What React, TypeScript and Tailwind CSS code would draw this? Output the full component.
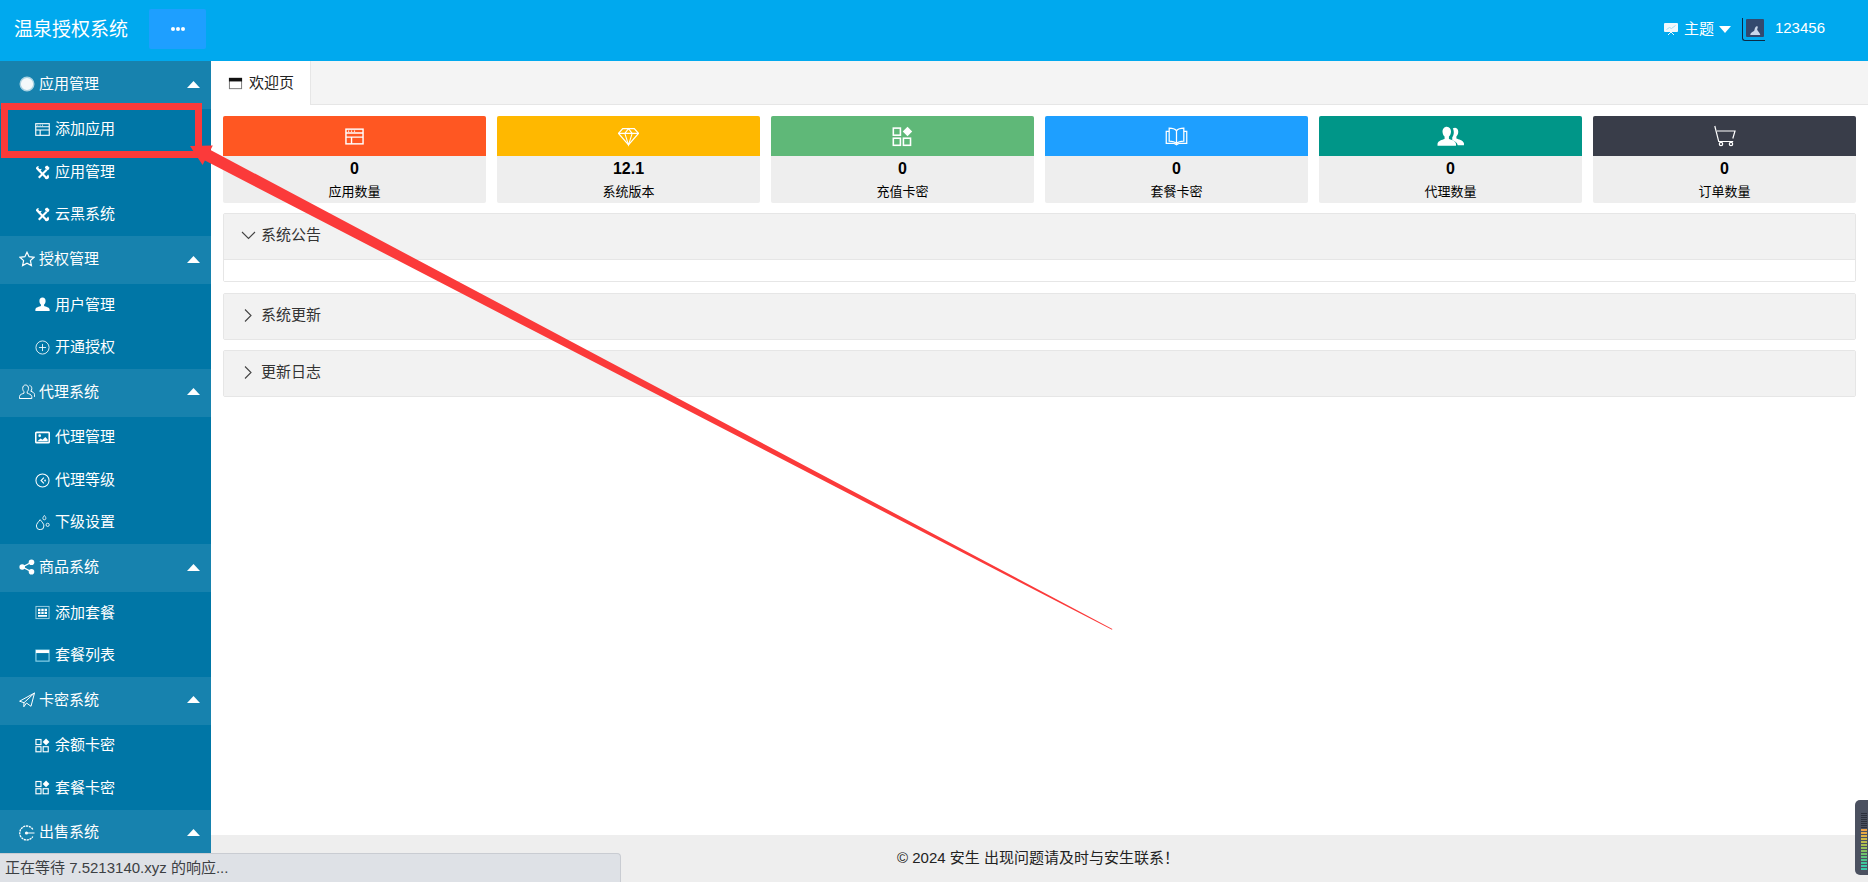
import React from "react";

const Ic = ({ w = 14, h = 14, vb = "0 0 16 16", children, className = "" }: { w?: number; h?: number; vb?: string; children: React.ReactNode; className?: string }) => (
  <svg width={w} height={h} viewBox={vb} fill="none" stroke="currentColor" strokeWidth="1.2" className={`shrink-0 ${className}`}>
    {children}
  </svg>
);

const I: Record<string, React.ReactNode> = {
  circle: <circle cx="8" cy="8" r="6.8" fill="#f4f8fa" stroke="#a9d2e2" strokeWidth="1.4" />,
  template: (
    <>
      <rect x="0.8" y="1.800" width="14.400" height="12.400" />
      <path d="M.8 5h14.400M.8 8.500h14.400M5.500 8.500V14" />
      <path d="M2.500 3.400h1M5 3.400h1M7.500 3.400h1" strokeWidth="1" />
    </>
  ),
  tools: (
    <>
      <path d="M4 13.500 12.500 5" strokeWidth="2.200" />
      <path d="M3.500 5 12 13.500" strokeWidth="2.200" />
      <path d="M1 4c0-2 1.500-3 3-3L3.500 3l1.500 1.500L7 4c0 1.500-1.500 3-3.500 2.500z" fill="currentColor" stroke="none" />
      <path d="M11 1.500l2-1 2.500 2.500-1 2-1.500.5-2.500-2.500z" fill="currentColor" stroke="none" />
      <path d="M10.500 14.500c1 1 3 1 4-.5s.2-3-.5-4z" fill="currentColor" stroke="none" />
    </>
  ),
  star: <path d="M8 1.200l2.100 4.500 4.900.6-3.600 3.300 1 4.900L8 12.100l-4.400 2.400 1-4.900L1 6.300l4.900-.6z" />,
  user: <path d="M8 .6c2.200 0 3.300 1.700 3.300 3.600 0 1.600-.8 3.300-1.600 3.900v1.500c1.600.7 5.700 1.400 5.900 3.700v1.700H.4v-1.700c.2-2.300 4.300-3 5.900-3.700V8.100C5.500 7.500 4.700 5.800 4.700 4.200 4.700 2.300 5.800.6 8 .6z" fill="currentColor" stroke="none" />,
  add: (
    <>
      <circle cx="8" cy="8" r="7" strokeWidth="0.9" />
      <path d="M8 4.200v7.600M4.200 8h7.600" strokeWidth="0.9" />
    </>
  ),
  agent: (
    <>
      <path d="M6.500 1c2 0 3 1.500 3 3.400 0 1.400-.6 2.700-1.300 3.300v1.500c1.500.6 4.300 1.200 4.600 3.300v2H.4v-2c.3-2.100 3.100-2.700 4.600-3.300V7.700c-.7-.6-1.300-1.900-1.300-3.300C3.700 2.500 4.800 1 6.500 1z" strokeWidth="1" />
      <path d="M10.500 1.300c1.500.4 2.300 1.700 2.300 3.200 0 1-.4 2.100-1 2.700 1.600.6 3.600 1.500 3.800 3.400v2.300" strokeWidth="1" />
    </>
  ),
  picture: (
    <>
      <rect x="0.800" y="2.500" width="14.400" height="11" rx="1" strokeWidth="1.700" />
      <circle cx="5" cy="6" r="1.400" fill="currentColor" stroke="none" />
      <path d="M2.500 12l3.500-3 2 1.500 3-3 2.500 2.500V12z" fill="currentColor" stroke="none" />
    </>
  ),
  ret: (
    <>
      <circle cx="8" cy="8" r="7" strokeWidth="1.100" />
      <path d="M9.500 5 6.500 8l3 3" />
      <circle cx="10.800" cy="8" r="0.400" />
    </>
  ),
  drops: (
    <>
      <path d="M5.500 5c1.900 2.500 4 4.300 4 6.700a4 4 0 0 1-8 0C1.500 9.300 3.600 7.500 5.500 5z" strokeWidth="1" />
      <path d="M10 .5c.9 1.100 1.600 2 1.600 3a1.600 1.600 0 0 1-3.200 0c0-1 .7-1.900 1.600-3z" strokeWidth="0.900" />
      <circle cx="13.500" cy="10.500" r="1.700" strokeWidth="0.900" />
    </>
  ),
  share: (
    <>
      <path d="M12 3.500 3.500 8l8.500 4.500" strokeWidth="1.400" />
      <circle cx="12.500" cy="3.200" r="2.800" fill="currentColor" stroke="none" />
      <circle cx="3.200" cy="8" r="2.800" fill="currentColor" stroke="none" />
      <circle cx="12.500" cy="12.800" r="2.800" fill="currentColor" stroke="none" />
    </>
  ),
  table: (
    <>
      <rect x="1" y="1.500" width="14" height="13" strokeWidth="1" stroke="#9fd0e2" />
      <path d="M3.200 4h2.600v2.400H3.200zM6.700 4h2.600v2.400H6.700zM10.200 4h2.600v2.400h-2.600zM3.200 7.300h2.600v2.400H3.200zM6.700 7.300h2.600v2.400H6.700zM10.200 7.300h2.600v2.400h-2.600zM3.200 10.600h9.600v1.800H3.200z" fill="currentColor" stroke="none" />
    </>
  ),
  win: (
    <>
      <rect x="1" y="2.200" width="14" height="11.800" strokeWidth="1.200" stroke="#8fd6ec" />
      <rect x="1" y="2.200" width="14" height="3.200" fill="currentColor" stroke="none" />
    </>
  ),
  winDark: (
    <>
      <rect x="1.500" y="2.500" width="13" height="11" strokeWidth="1" stroke="#777" />
      <rect x="1" y="2" width="14" height="3.800" fill="#111" stroke="none" />
    </>
  ),
  send: <path d="M15.500 1 .6 9.200l4.400 1.500zM15.500 1 12 14.300 7.500 11 4.800 14.800l.2-4.100" strokeWidth="1" strokeLinejoin="round" />,
  app: (
    <>
      <rect x="1" y="1.600" width="5.400" height="5.400" />
      <rect x="1" y="9.300" width="5.400" height="5.400" />
      <rect x="8.700" y="9.300" width="5.400" height="5.400" />
      <path d="M11.800 .6 15.400 4.200l-3.600 3.600-3.600-3.600z" fill="currentColor" stroke="none" />
    </>
  ),
  sell: (
    <>
      <path d="M13.800 4.500A7 7 0 1 0 13.800 11.500" strokeWidth="1.300" strokeDasharray="2.200 0.700" />
      <circle cx="7.500" cy="8" r="1.600" fill="currentColor" stroke="none" />
      <path d="M8.500 8H15.500" strokeWidth="1" />
    </>
  ),
  diamond: (
    <>
      <path d="M4.500 2.500h11L19.500 7 10 18 .5 7z" />
      <path d="M.5 7h19M6.500 7 10 18l3.500-11M6.500 7l3.500-4.500L13.500 7" strokeWidth="1" />
    </>
  ),
  read: (
    <>
      <path d="M11 4.500C9.500 2.700 7 2 4 2v12.500c3 0 5.500.7 7 2.500 1.500-1.800 4-2.500 7-2.500V2c-3 0-5.500.7-7 2.500zM11 4.500V17" />
      <path d="M4 5H1.200v11.500H8.500L11 18l2.500-1.500h7.300V5H18" />
    </>
  ),
  group: (
    <>
      <path d="M17.500 1.500c2 .2 3 2 3 4 0 1.800-.8 3.600-1.800 4.400v2c1.900.8 6.400 1.600 7.300 4.500v2h-6c-.6-2.900-3-3.800-5.300-4.700v-3c1-1 1.500-2.800 1.500-4.500 0-1.600-.3-3-1-3.800.6-.5 1.400-.9 2.300-.9z" fill="currentColor" stroke="none" />
      <path d="M9.500.5c2.600 0 4 2.200 4 4.700 0 2-.9 4-2 4.900v2.400c2.300.9 6.300 1.700 6.800 4.500v2H.5v-2c.5-2.800 4.500-3.600 6.800-4.500v-2.400c-1.100-.9-2-2.900-2-4.900C5.300 2.700 6.900.5 9.500.5z" fill="currentColor" stroke="none" />
    </>
  ),
  cart: (
    <>
      <path d="M.8 1l3.900 15.500h14.500" />
      <path d="M3 6h18l-2.200 7.500" />
      <circle cx="7" cy="19" r="1.700" />
      <circle cx="17" cy="19" r="1.700" />
    </>
  ),
};

const groups = [
  { title: "应用管理", icon: "circle", items: [["添加应用", "template"], ["应用管理", "tools"], ["云黑系统", "tools"]] },
  { title: "授权管理", icon: "star", items: [["用户管理", "user"], ["开通授权", "add"]] },
  { title: "代理系统", icon: "agent", items: [["代理管理", "picture"], ["代理等级", "ret"], ["下级设置", "drops"]] },
  { title: "商品系统", icon: "share", items: [["添加套餐", "table"], ["套餐列表", "win"]] },
  { title: "卡密系统", icon: "send", items: [["余额卡密", "app"], ["套餐卡密", "app"]] },
  { title: "出售系统", icon: "sell", items: [] as string[][] },
];

const stats = [
  { n: "0", label: "应用数量", bg: "bg-[#ff5722]", icon: "template", vb: "0 0 16 16", w: 19, h: 19 },
  { n: "12.1", label: "系统版本", bg: "bg-[#ffb800]", icon: "diamond", vb: "0 0 20 20", w: 21, h: 21 },
  { n: "0", label: "充值卡密", bg: "bg-[#5fb878]", icon: "app", vb: "0 0 16 16", w: 21, h: 21 },
  { n: "0", label: "套餐卡密", bg: "bg-[#1e9fff]", icon: "read", vb: "0 0 22 20", w: 23, h: 21 },
  { n: "0", label: "代理数量", bg: "bg-[#009688]", icon: "group", vb: "0 0 27 20", w: 28, h: 21 },
  { n: "0", label: "订单数量", bg: "bg-[#393d49]", icon: "cart", vb: "0 0 22 22", w: 22, h: 22 },
];

const Panel = ({ title, open }: { title: string; open?: boolean }) => (
  <div className="rounded-[2px] border border-[#e6e6e6]">
    <div className={`flex items-center bg-[#f2f2f2] pl-[17px] pb-[2px] text-[15px] text-[#333] ${open ? "h-[46px] border-b border-[#e6e6e6]" : "h-[45px]"}`}>
      <svg width="15" height="15" viewBox="0 0 15 15" fill="none" stroke="#444" strokeWidth="1.100" className="mr-[5px] shrink-0">
        {open ? <path d="M1 4 7.500 10.500 14 4" /> : <path d="M4 1.500 10 7.500 4 13.500" />}
      </svg>
      {title}
    </div>
    {open && <div className="h-[21px] bg-white" />}
  </div>
);

const Meter = () => {
  const cols = ["#39c9a8", "#39c9a8", "#3fc79c", "#4cc68d", "#5fc47c", "#72c36e", "#85c263", "#98c15a", "#aabf52", "#bdbc4c", "#cfb848", "#dfb145", "#e8a945", "#eda247"];
  return (
    <div className="absolute bottom-[7px] right-0 flex h-[75px] w-[13px] flex-col items-end justify-end gap-[1px] rounded-l-[5px] bg-[#4b5160] pb-[5px] pr-[1px]">
      {Array.from({ length: 8 }).map((_, i) => (
        <div key={i} className="h-[1px] w-[6px] bg-[#2c303b]" />
      ))}
      {cols.slice().reverse().map((c, i) => (
        <div key={i} className="h-[2px] w-[6px]" style={{ background: c }} />
      ))}
    </div>
  );
};

export default function App() {
  return (
    <div className="relative flex h-[882px] w-[1868px] flex-col overflow-hidden bg-white font-['Liberation_Sans','Noto_Sans_CJK_SC',sans-serif] text-[14px]">
      <header className="flex h-[61px] shrink-0 items-center bg-[#00a9ee] pb-[3px] text-white">
        <div className="ml-[14px] w-[135px] text-[19px] leading-none">温泉授权系统</div>
        <button className="flex h-[40px] w-[57px] items-center justify-center gap-[1px] rounded-[2px] bg-[#1e9fff]">
          <span className="size-[4px] rounded-full bg-white" />
          <span className="size-[4px] rounded-full bg-white" />
          <span className="size-[4px] rounded-full bg-white" />
        </button>
        <div className="ml-auto mr-[43px] flex items-center">
          <svg width="14" height="14" viewBox="0 0 14 14" className="mr-[6px]">
            <rect x="0" y="1" width="14" height="9" rx="1" fill="#f1f8fc" />
            <path d="M4 13l3-3 3 3" stroke="#f1f8fc" fill="none" />
            <path d="M2.500 7.500l3-2 2 1 4-3" stroke="#a5dcf3" fill="none" />
          </svg>
          <span className="mr-[5px] text-[15px]">主题</span>
          <svg width="12" height="7" viewBox="0 0 12 7" className="mr-[11px]">
            <path d="M0 0h12L6 7z" fill="white" />
          </svg>
          <div className="mr-[10px] flex h-[23px] w-[23px] items-start justify-end rounded-bl-[3px] border-b border-l border-[#0b2a45] pr-[1px] pt-[1px]">
            <svg width="18" height="18" viewBox="0 0 17 17">
              <rect width="17" height="17" rx="1" fill="#33496e" />
              <path d="M4 15c.5-3 3.500-2.500 4-4.500.2-2 1.500-4.500 3-3.500 .5 1-.5 2-.5 3 .5 2 2.500 2.500 3 5z" fill="#c8d6ea" />
            </svg>
          </div>
          <span className="-translate-y-[1px] text-[15px]">123456</span>
        </div>
      </header>

      <div className="flex min-h-0 flex-1">
        <aside className="w-[211px] shrink-0 overflow-hidden bg-[#0076a6] text-[15px] text-white">
          {groups.map((g) => (
            <div key={g.title}>
              <div className="flex h-[48px] items-center bg-[#1782ae] pb-[2px] pl-[19px] pr-[11px]">
                <Ic w={16} h={16} className="mr-[4px]">{I[g.icon]}</Ic>
                <span>{g.title}</span>
                <svg width="13" height="7" viewBox="0 0 13 7" className="ml-auto">
                  <path d="M6.500 0 13 7H0z" fill="white" />
                </svg>
              </div>
              {g.items.map(([label, icon]) => (
                <div key={label + icon} className="flex h-[42.4px] items-center pb-[1px] pl-[35px]">
                  <Ic w={15} h={15} className="mr-[5px]">{I[icon]}</Ic>
                  <span>{label}</span>
                </div>
              ))}
            </div>
          ))}
        </aside>

        <main className="flex min-w-0 flex-1 flex-col">
          <div className="flex h-[44px] shrink-0 border-b border-[#e6e6e6] bg-[#f4f4f4]">
            <div className="flex h-[44px] w-[100px] items-center border-r border-[#e6e6e6] bg-white pl-[17px] text-[15px] text-[#222]">
              <Ic w={15} h={15} className="mr-[6px]">{I.winDark}</Ic>
              欢迎页
            </div>
          </div>
          <div className="flex-1 pl-[12px] pr-[12px] pt-[11px]">
            <div className="grid grid-cols-6 gap-[11px]">
              {stats.map((s) => (
                <div key={s.label} className="h-[87px] overflow-hidden rounded-[2px] bg-[#eeeeee] text-center">
                  <div className={`flex h-[40px] items-center justify-center text-white ${s.bg}`}>
                    <Ic w={s.w} h={s.h} vb={s.vb}>{I[s.icon]}</Ic>
                  </div>
                  <div className="mt-[4px] text-[16px] font-bold leading-[18px] text-black">{s.n}</div>
                  <div className="mt-[6px] text-[13px] leading-[16px] text-black">{s.label}</div>
                </div>
              ))}
            </div>
            <div className="mt-[10px] flex flex-col">
              <Panel title="系统公告" open />
              <div className="mt-[11px]"><Panel title="系统更新" /></div>
              <div className="mt-[10px]"><Panel title="更新日志" /></div>
            </div>
          </div>
          <footer className="flex h-[47px] shrink-0 items-center justify-center bg-[#eeeeee] pr-[3px] text-[15px] text-[#222]">
            © 2024 安生 出现问题请及时与安生联系！
          </footer>
        </main>
      </div>

      {/* annotation drawn over the screenshot */}
      <svg className="pointer-events-none absolute left-0 top-0" width="1868" height="882" viewBox="0 0 1868 882">
        <rect x="4.500" y="106.500" width="194" height="48" fill="none" stroke="#fb3a3a" strokeWidth="7" />
        <polygon points="190,146 212.800,145.600 210.500,150 1112.400,629 1112,629.800 204.900,160.600 202.600,165" fill="#fb3a3a" />
      </svg>

      <Meter />

      <div className="absolute bottom-0 left-0 flex h-[29px] w-[621px] items-center rounded-tr-[4px] border-t border-r border-[#c9ccd2] bg-[#dee1e6] pl-[5px] text-[15px] text-[#3c4043]">
        正在等待 7.5213140.xyz 的响应...
      </div>
    </div>
  );
}
